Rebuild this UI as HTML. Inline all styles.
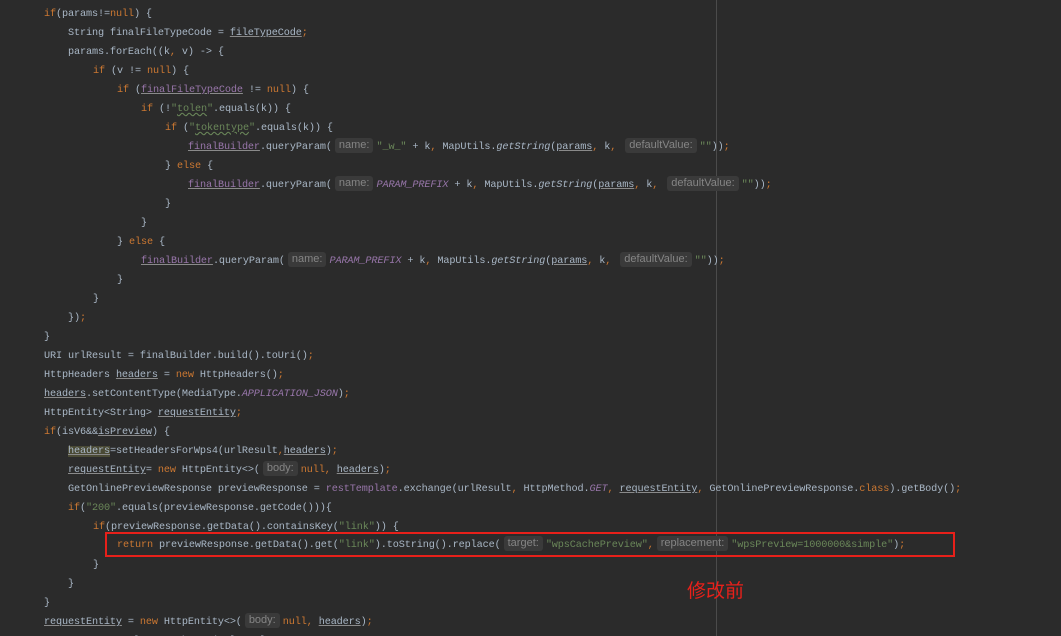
<!DOCTYPE html>
<html><head><meta charset="utf-8">
<style>
html,body{margin:0;padding:0;width:1061px;height:636px;overflow:hidden;}
body{background:#2b2b2b;position:relative;
font-family:"Liberation Mono","Noto Sans CJK SC",monospace;font-size:10.2px;letter-spacing:-0.12px;color:#a9b7c6;}
.l{position:absolute;white-space:pre;height:19px;line-height:19px;}
.k{color:#cc7832;}
.s{color:#6a8759;}
.f{color:#9876aa;}
.u{text-decoration:underline;text-decoration-color:#8a8a8a;}
.w{text-decoration:underline wavy #6a8759;}
.it{font-style:italic;}
.h{display:inline-block;background:#3a3a3a;color:#858585;font-family:"Liberation Sans",sans-serif;font-size:11px;letter-spacing:0;border-radius:3px;padding:0 4px;height:15px;line-height:15px;vertical-align:1px;margin:0 3px;}
.hl{background:#4a4a35;}
.vline{position:absolute;left:716px;top:0;width:1px;height:636px;background:#4b4b4b;}
.box{position:absolute;left:105px;top:532px;width:846px;height:21px;border:2px solid #e8201a;}
.note{position:absolute;left:687px;top:576px;color:#e8201a;font-family:"Noto Sans CJK SC",sans-serif;font-size:19px;letter-spacing:0;}
</style></head><body>
<div class="vline"></div>
<div class="l" style="left:44px;top:5px"><span class="k">if</span>(params!=<span class="k">null</span>) {</div>
<div class="l" style="left:68px;top:24px">String finalFileTypeCode = <span class="u">fileTypeCode</span><span class="k">;</span></div>
<div class="l" style="left:68px;top:43px">params.forEach((k<span class="k">,</span> v) -&gt; {</div>
<div class="l" style="left:93px;top:62px"><span class="k">if</span> (v != <span class="k">null</span>) {</div>
<div class="l" style="left:117px;top:81px"><span class="k">if</span> (<span class="f u">finalFileTypeCode</span> != <span class="k">null</span>) {</div>
<div class="l" style="left:141px;top:100px"><span class="k">if</span> (!<span class="s">"<span class="w">tolen</span>"</span>.equals(k)) {</div>
<div class="l" style="left:165px;top:119px"><span class="k">if</span> (<span class="s">"<span class="w">tokentype</span>"</span>.equals(k)) {</div>
<div class="l" style="left:188px;top:138px"><span class="f u">finalBuilder</span>.queryParam(<span class="h">name:</span><span class="s">"_w_"</span> + k<span class="k">,</span> MapUtils.<span class="it">getString</span>(<span class="u">params</span><span class="k">,</span> k<span class="k">,</span> <span class="h">defaultValue:</span><span class="s">""</span>))<span class="k">;</span></div>
<div class="l" style="left:165px;top:157px">} <span class="k">else</span> {</div>
<div class="l" style="left:188px;top:176px"><span class="f u">finalBuilder</span>.queryParam(<span class="h">name:</span><span class="f it">PARAM_PREFIX</span> + k<span class="k">,</span> MapUtils.<span class="it">getString</span>(<span class="u">params</span><span class="k">,</span> k<span class="k">,</span> <span class="h">defaultValue:</span><span class="s">""</span>))<span class="k">;</span></div>
<div class="l" style="left:165px;top:195px">}</div>
<div class="l" style="left:141px;top:214px">}</div>
<div class="l" style="left:117px;top:233px">} <span class="k">else</span> {</div>
<div class="l" style="left:141px;top:252px"><span class="f u">finalBuilder</span>.queryParam(<span class="h">name:</span><span class="f it">PARAM_PREFIX</span> + k<span class="k">,</span> MapUtils.<span class="it">getString</span>(<span class="u">params</span><span class="k">,</span> k<span class="k">,</span> <span class="h">defaultValue:</span><span class="s">""</span>))<span class="k">;</span></div>
<div class="l" style="left:117px;top:271px">}</div>
<div class="l" style="left:93px;top:290px">}</div>
<div class="l" style="left:68px;top:309px">})<span class="k">;</span></div>
<div class="l" style="left:44px;top:328px">}</div>
<div class="l" style="left:44px;top:347px">URI urlResult = finalBuilder.build().toUri()<span class="k">;</span></div>
<div class="l" style="left:44px;top:366px">HttpHeaders <span class="u">headers</span> = <span class="k">new</span> HttpHeaders()<span class="k">;</span></div>
<div class="l" style="left:44px;top:385px"><span class="u">headers</span>.setContentType(MediaType.<span class="f it">APPLICATION_JSON</span>)<span class="k">;</span></div>
<div class="l" style="left:44px;top:404px">HttpEntity&lt;String&gt; <span class="u">requestEntity</span><span class="k">;</span></div>
<div class="l" style="left:44px;top:423px"><span class="k">if</span>(isV6&amp;&amp;<span class="u">isPreview</span>) {</div>
<div class="l" style="left:68px;top:442px"><span class="u hl">headers</span>=setHeadersForWps4(urlResult<span class="k">,</span><span class="u">headers</span>)<span class="k">;</span></div>
<div class="l" style="left:68px;top:461px"><span class="u">requestEntity</span>= <span class="k">new</span> HttpEntity&lt;&gt;(<span class="h">body:</span><span class="k">null,</span> <span class="u">headers</span>)<span class="k">;</span></div>
<div class="l" style="left:68px;top:480px">GetOnlinePreviewResponse previewResponse = <span class="f">restTemplate</span>.exchange(urlResult<span class="k">,</span> HttpMethod.<span class="f it">GET</span><span class="k">,</span> <span class="u">requestEntity</span><span class="k">,</span> GetOnlinePreviewResponse.<span class="k">class</span>).getBody()<span class="k">;</span></div>
<div class="l" style="left:68px;top:499px"><span class="k">if</span>(<span class="s">"200"</span>.equals(previewResponse.getCode())){</div>
<div class="l" style="left:93px;top:518px"><span class="k">if</span>(previewResponse.getData().containsKey(<span class="s">"link"</span>)) {</div>
<div class="l" style="left:117px;top:536px"><span class="k">return</span> previewResponse.getData().get(<span class="s">"link"</span>).toString().replace(<span class="h">target:</span><span class="s">"wpsCachePreview"</span><span class="k">,</span><span class="h">replacement:</span><span class="s">"wpsPreview=1000000&amp;simple"</span>)<span class="k">;</span></div>
<div class="l" style="left:93px;top:556px">}</div>
<div class="l" style="left:68px;top:575px">}</div>
<div class="l" style="left:44px;top:594px">}</div>
<div class="l" style="left:44px;top:613px"><span class="u">requestEntity</span> = <span class="k">new</span> HttpEntity&lt;&gt;(<span class="h">body:</span><span class="k">null,</span> <span class="u">headers</span>)<span class="k">;</span></div>
<div class="l" style="left:44px;top:632px">return restTemplate.exchange(urlResult,</div>
<div class="box"></div>
<div class="note">修改前</div>
</body></html>
